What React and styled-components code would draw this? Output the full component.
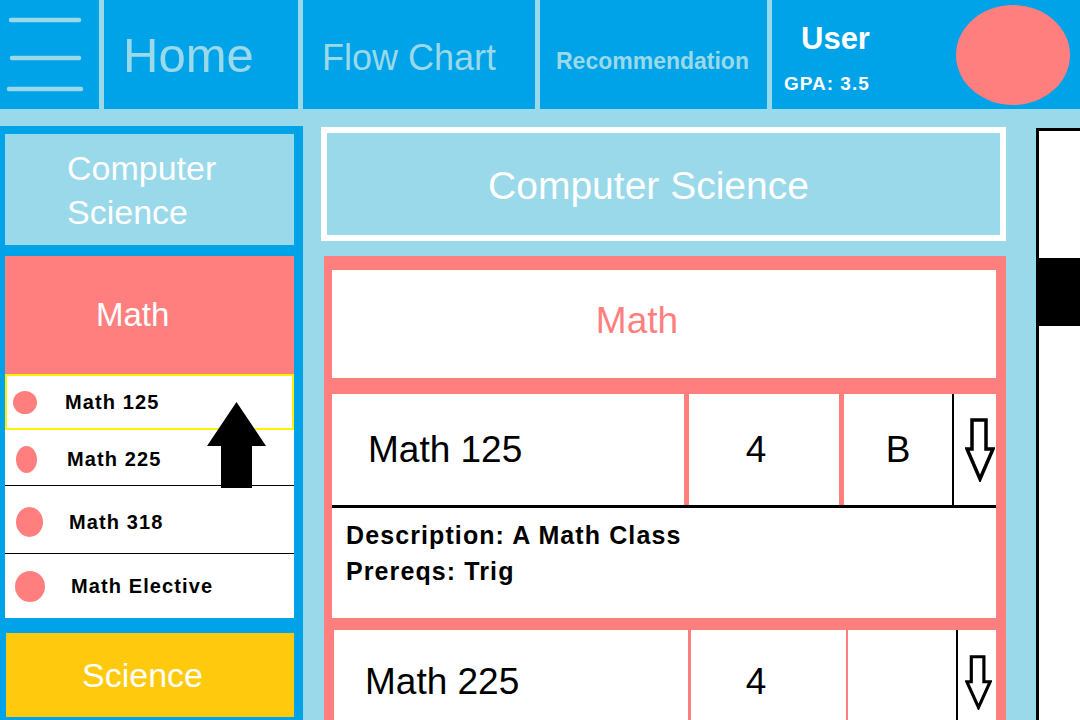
import React from "react";
import styled, { createGlobalStyle } from "styled-components";

const COLORS = {
  nav: "#00A2E8",
  sky: "#99D9EA",
  pink: "#FF7F7F",
  gold: "#FFC90E",
  yellow: "#FFF200",
};

const GlobalStyle = createGlobalStyle`
  html, body {
    margin: 0;
    padding: 0;
    background: ${COLORS.sky};
    overflow: hidden;
  }
  body {
    font-family: "Liberation Sans", Arial, sans-serif;
  }
  * {
    box-sizing: border-box;
  }
`;

const Page = styled.div`
  width: 1080px;
  height: 720px;
  overflow: hidden;
  background: ${COLORS.sky};
`;

/* ---------- top bar ---------- */

const NavBar = styled.header`
  display: flex;
  gap: 5px;
  height: 109px;
  background: ${COLORS.sky};
`;

const NavCell = styled.div`
  width: ${(p) => (p.$w ? `${p.$w}px` : "auto")};
  flex: ${(p) => (p.$w ? "none" : 1)};
  display: flex;
  align-items: center;
  padding: ${(p) => p.$pt || 0}px 0 0 ${(p) => p.$pl || 0}px;
  background: ${COLORS.nav};
  color: ${COLORS.sky};
  font-size: ${(p) => p.$size || 16}px;
  font-weight: ${(p) => (p.$bold ? 700 : 400)};
  white-space: nowrap;
`;

const UserCell = styled(NavCell)`
  align-items: stretch;
`;

const UserInfo = styled.div`
  display: flex;
  flex-direction: column;
  gap: 16px;
  padding: 21px 0 0 12px;
  color: #fff;
`;

const UserName = styled.div`
  margin-left: 17px;
  font-size: 31px;
  line-height: 36px;
  font-weight: 700;
`;

const Gpa = styled.div`
  font-size: 19px;
  line-height: 22px;
  font-weight: 700;
  letter-spacing: 1px;
`;

const Avatar = styled.div`
  align-self: center;
  width: 114px;
  height: 100px;
  margin: 0 10px 0 auto;
  border-radius: 50%;
  background: ${COLORS.pink};
`;

const Burger = () => (
  <svg width="99" height="109" viewBox="0 0 99 109">
    <g stroke={COLORS.sky} strokeWidth="4.5" strokeLinecap="round">
      <line x1="11" y1="20" x2="79" y2="20" />
      <line x1="12" y1="58" x2="79" y2="58" />
      <line x1="9" y1="89" x2="81" y2="89" />
    </g>
  </svg>
);

/* ---------- body ---------- */

const Content = styled.div`
  display: flex;
  height: 611px;
  padding-top: 17px;
`;

const Sidebar = styled.aside`
  width: 303px;
  flex: none;
  display: flex;
  flex-direction: column;
  padding: 8px 9px 0 5px;
  background: ${COLORS.nav};
`;

const SideBlock = styled.div`
  display: flex;
  align-items: center;
  flex: none;
  height: ${(p) => p.$h}px;
  margin-top: ${(p) => p.$mt || 0}px;
  margin-left: ${(p) => p.$ml || 0}px;
  padding-left: ${(p) => p.$pl}px;
  background: ${(p) => p.$bg};
  color: #fff;
  font-size: ${(p) => p.$size}px;
  line-height: 44px;
`;

const CourseList = styled.ul`
  position: relative;
  flex: none;
  display: flex;
  flex-direction: column;
  margin: 0;
  padding: 0;
  list-style: none;
  background: #fff;
`;

const ListItem = styled.li`
  display: flex;
  align-items: center;
  height: ${(p) => p.$h}px;
  padding: ${(p) => p.$pt || 0}px 0 0 ${(p) => p.$pl}px;
  border: ${(p) => (p.$selected ? `2px solid ${COLORS.yellow}` : "none")};
  border-bottom: ${(p) =>
    p.$selected ? `2px solid ${COLORS.yellow}` : p.$line ? "1px solid #000" : "none"};
  font-size: 20px;
  font-weight: 700;
  letter-spacing: 1.1px;
  color: #000;
`;

const Dot = styled.span`
  flex: none;
  width: ${(p) => p.$w}px;
  height: ${(p) => p.$h}px;
  margin-right: ${(p) => p.$gap}px;
  border-radius: 50%;
  background: ${COLORS.pink};
`;

const UpArrow = styled.svg`
  position: absolute;
  left: 202px;
  top: 28px;
`;

const MainColumn = styled.main`
  width: 685px;
  flex: none;
  display: flex;
  flex-direction: column;
  margin: 1px 0 0 18px;
`;

const MajorHeader = styled.div`
  display: flex;
  align-items: center;
  justify-content: center;
  flex: none;
  height: 114px;
  padding: 4px 30px 0 0;
  border: 6px solid #fff;
  color: #fff;
  font-size: 39px;
`;

const Card = styled.section`
  flex: none;
  display: flex;
  flex-direction: column;
  margin: 15px 0 0 3px;
  padding: 14px 10px 0 8px;
  background: ${COLORS.pink};
`;

const CardTitle = styled.div`
  display: flex;
  align-items: center;
  justify-content: center;
  height: 108px;
  flex: none;
  padding: 0 54px 6px 0;
  background: #fff;
  color: ${COLORS.pink};
  font-size: 37px;
`;

const CourseBlock = styled.div`
  flex: none;
  margin-top: ${(p) => p.$mt}px;
  border-left: ${(p) => p.$inset}px solid ${COLORS.pink};
  background: #fff;
`;

const RowCells = styled.div`
  display: flex;
  height: ${(p) => p.$h}px;
  border-bottom: ${(p) => (p.$open ? "3px solid #000" : "none")};
  background: #fff;
`;

const Cell = styled.div`
  width: ${(p) => p.$w}px;
  flex: none;
  display: flex;
  align-items: center;
  justify-content: ${(p) => p.$justify || "center"};
  padding: 0 ${(p) => p.$pr || 0}px 0 ${(p) => p.$pl || 0}px;
  border-left: ${(p) => p.$sep || 0}px solid ${COLORS.pink};
  color: #000;
  font-size: 37px;
`;

const ArrowCell = styled.div`
  flex: 1;
  display: flex;
  align-items: center;
  justify-content: center;
  padding: 0 0 0 ${(p) => p.$pl || 0}px;
  border-left: 2px solid #000;
`;

const Description = styled.div`
  height: 110px;
  padding: 9px 0 0 14px;
  color: #000;
  font-size: 25px;
  font-weight: 700;
  letter-spacing: 1.1px;
  line-height: 36px;
`;

const RightPanel = styled.aside`
  flex: 1;
  margin: 2px 0 0 30px;
  border-top: 3px solid #000;
  border-left: 3px solid #000;
  background: #fff;
`;

const ScrollThumb = styled.div`
  height: 68px;
  margin-top: 127px;
  background: #000;
`;

const DownArrow = ({ w, h }) => (
  <svg width={w} height={h} viewBox="0 0 30 64" preserveAspectRatio="none">
    <path
      d="M7 2 H21 V31 H28 L15 61 L2 31 H7 Z"
      fill="none"
      stroke="#000"
      strokeWidth="3.5"
    />
  </svg>
);

const sideCourses = [
  { name: "Math 125", h: 56, pl: 6, dot: [24, 23], gap: 28, selected: true },
  { name: "Math 225", h: 56, pl: 11, pt: 3, dot: [21, 27], gap: 30, line: true },
  { name: "Math 318", h: 68, pl: 11, pt: 5, dot: [27, 30], gap: 26, line: true },
  { name: "Math Elective", h: 64, pl: 10, dot: [30, 31], gap: 26 },
];

// cell widths include their left separator
const courses = [
  {
    name: "Math 125",
    credits: "4",
    grade: "B",
    open: true,
    h: 114,
    inset: 0,
    mt: 16,
    cols: [352, 155, 113],
    seps: [5, 5],
    namePad: 36,
    creditPad: 16,
    arrow: [30, 64],
    arrowPad: 9,
    desc: ["Description: A Math Class", "Prereqs: Trig"],
  },
  {
    name: "Math 225",
    credits: "4",
    grade: "",
    open: false,
    h: 104,
    inset: 2,
    mt: 12,
    cols: [354, 158, 110],
    seps: [3, 2],
    namePad: 31,
    creditPad: 25,
    arrow: [27, 55],
    arrowPad: 3,
  },
];

export default function App() {
  return (
    <Page>
      <GlobalStyle />
      <NavBar>
        <NavCell $w={99}>
          <Burger />
        </NavCell>
        <NavCell $w={194} $pl={19} $size={49}>
          Home
        </NavCell>
        <NavCell $w={232} $pl={19} $pt={7} $size={36}>
          Flow Chart
        </NavCell>
        <NavCell $w={227} $pl={16} $pt={14} $size={23} $bold>
          Recommendation
        </NavCell>
        <UserCell>
          <UserInfo>
            <UserName>User</UserName>
            <Gpa>GPA: 3.5</Gpa>
          </UserInfo>
          <Avatar />
        </UserCell>
      </NavBar>

      <Content>
        <Sidebar>
          <SideBlock $h={111} $pl={62} $size={34} $bg={COLORS.sky}>
            Computer Science
          </SideBlock>
          <SideBlock $h={118} $mt={11} $pl={91} $size={33} $bg={COLORS.pink}>
            Math
          </SideBlock>
          <CourseList>
            {sideCourses.map((c) => (
              <ListItem
                key={c.name}
                $h={c.h}
                $pl={c.pl}
                $pt={c.pt}
                $selected={c.selected}
                $line={c.line}
              >
                <Dot $w={c.dot[0]} $h={c.dot[1]} $gap={c.gap} />
                {c.name}
              </ListItem>
            ))}
            <UpArrow width="59" height="86" viewBox="0 0 59 86">
              <polygon points="29.5,0 59,44 45,44 45,86 14,86 14,44 0,44" fill="#000" />
            </UpArrow>
          </CourseList>
          <SideBlock $h={84} $mt={15} $ml={1} $pl={76} $size={34} $bg={COLORS.gold}>
            Science
          </SideBlock>
        </Sidebar>

        <MainColumn>
          <MajorHeader>Computer Science</MajorHeader>
          <Card>
            <CardTitle>Math</CardTitle>
            {courses.map((c) => (
              <CourseBlock key={c.name} $mt={c.mt} $inset={c.inset}>
                <RowCells $h={c.h} $open={c.open}>
                  <Cell $w={c.cols[0]} $justify="flex-start" $pl={c.namePad}>
                    {c.name}
                  </Cell>
                  <Cell $w={c.cols[1]} $sep={c.seps[0]} $pr={c.creditPad}>
                    {c.credits}
                  </Cell>
                  <Cell $w={c.cols[2]} $sep={c.seps[1]}>
                    {c.grade}
                  </Cell>
                  <ArrowCell $pl={c.arrowPad}>
                    <DownArrow w={c.arrow[0]} h={c.arrow[1]} />
                  </ArrowCell>
                </RowCells>
                {c.desc && (
                  <Description>
                    {c.desc.map((line) => (
                      <div key={line}>{line}</div>
                    ))}
                  </Description>
                )}
              </CourseBlock>
            ))}
          </Card>
        </MainColumn>

        <RightPanel>
          <ScrollThumb />
        </RightPanel>
      </Content>
    </Page>
  );
}
